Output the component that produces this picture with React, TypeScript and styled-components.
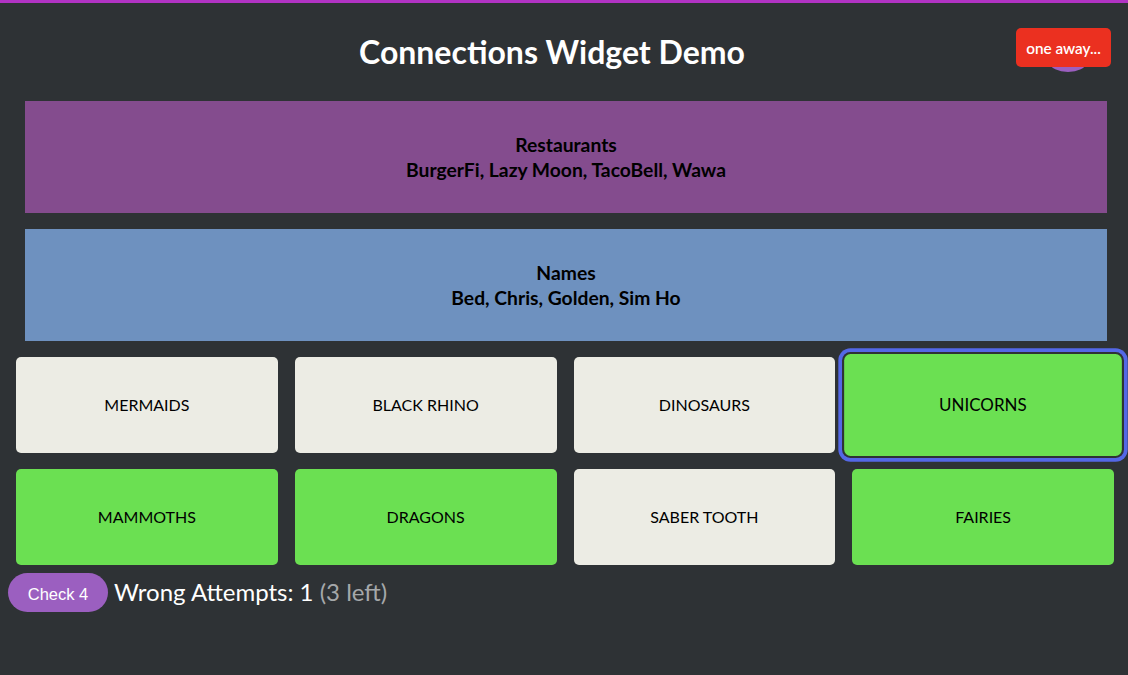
import React from "react";
import styled, { createGlobalStyle } from "styled-components";

const Global = createGlobalStyle`
  html, body { margin: 0; padding: 0; background: #2e3235; }
  body { font-family: Lato, "Noto Sans", sans-serif; }
`;

const Page = styled.div`
  border-top: 3px solid #b133c4;
  background: #2e3235;
  min-height: 672px;
  padding: 0 14px 0 16px;
  position: relative;
`;

const Header = styled.header`
  height: 98px;
  display: flex;
  align-items: center;
  justify-content: center;
  padding-right: 26px;
  box-sizing: border-box;
`;

const Title = styled.h1`
  margin: 0 0 2px;
  font-family: Lato, sans-serif;
  font-weight: 700;
  font-size: 32px;
  color: #ffffff;
`;

const ToastWrap = styled.div`
  position: absolute;
  top: 25px;
  right: 17px;
`;

const Bubble = styled.div`
  position: absolute;
  left: 34px;
  top: 26px;
  width: 36px;
  height: 18px;
  border-radius: 50%;
  background: #9b5fc0;
`;

const Toast = styled.div`
  position: relative;
  background: #eb3020;
  color: #fff;
  border-radius: 5px;
  width: 95px;
  height: 39px;
  display: flex;
  align-items: center;
  justify-content: center;
  font-family: Lato, sans-serif;
  font-weight: 600;
  font-size: 15.3px;
`;

const Band = styled.div<{ $bg: string }>`
  background: ${(p) => p.$bg};
  height: 112px;
  margin: 0 7px 16px 9px;
  display: flex;
  flex-direction: column;
  align-items: center;
  justify-content: center;
  color: #000;
  font-weight: 700;
  font-size: 19.3px;
  line-height: 25px;
`;

const Grid = styled.div`
  display: grid;
  grid-template-columns: repeat(4, 1fr);
  gap: 16px 17px;
`;

const Tile = styled.button<{ $on: boolean; $focus?: boolean }>`
  height: 96px;
  border: none;
  border-radius: 5px;
  padding: 0 0 2px;
  background: ${(p) => (p.$on ? "#6be052" : "#ecece4")};
  font-family: Lato, sans-serif;
  font-size: 16px;
  color: #000;
  text-transform: uppercase;
  cursor: pointer;
  ${(p) =>
    p.$focus
      ? `transform: scale(1.06); box-shadow: 0 0 0 2px #2e3235, 0 0 0 5.5px #5468e6; border-radius: 6px;`
      : ""}
`;

const Footer = styled.div`
  display: flex;
  align-items: center;
  gap: 6px;
  margin: 8px 0 0 -8px;
`;

const CheckButton = styled.button`
  width: 100px;
  height: 39px;
  border: none;
  border-radius: 20px;
  padding: 3px 0 0;
  background: #9b5fc0;
  color: #fff;
  font-family: "Liberation Sans", Arial, sans-serif;
  font-size: 16.5px;
`;

const Attempts = styled.span`
  color: #fff;
  font-size: 24px;
  font-family: Lato, sans-serif;
  padding-bottom: 3px;
`;

const Left = styled.span`
  color: #a5a8aa;
`;

const tiles = [
  { t: "Mermaids", on: false },
  { t: "Black Rhino", on: false },
  { t: "Dinosaurs", on: false },
  { t: "Unicorns", on: true, focus: true },
  { t: "Mammoths", on: true },
  { t: "Dragons", on: true },
  { t: "Saber Tooth", on: false },
  { t: "Fairies", on: true },
];

export default function App() {
  return (
    <>
      <Global />
      <Page>
        <Header>
          <Title>Connections Widget Demo</Title>
        </Header>
        <ToastWrap>
          <Bubble />
          <Toast>one away...</Toast>
        </ToastWrap>
        <Band $bg="#844c8e">
          <div>Restaurants</div>
          <div>BurgerFi, Lazy Moon, TacoBell, Wawa</div>
        </Band>
        <Band $bg="#6e91bf">
          <div>Names</div>
          <div>Bed, Chris, Golden, Sim Ho</div>
        </Band>
        <Grid>
          {tiles.map((x) => (
            <Tile key={x.t} $on={x.on} $focus={x.focus}>
              {x.t}
            </Tile>
          ))}
        </Grid>
        <Footer>
          <CheckButton>Check 4</CheckButton>
          <Attempts>
            Wrong Attempts: 1 <Left>(3 left)</Left>
          </Attempts>
        </Footer>
      </Page>
    </>
  );
}
